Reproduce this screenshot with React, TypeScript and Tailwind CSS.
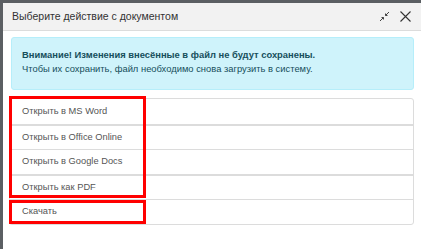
import React from 'react';

const actions = [
  { label: 'Открыть в MS Word', sep: 'border-t-0' },
  { label: 'Открыть в Office Online', sep: 'border-t-2' },
  { label: 'Открыть в Google Docs', sep: 'border-t' },
  { label: 'Открыть как PDF', sep: 'border-t-2' },
  { label: 'Скачать', sep: 'border-t' }
];

export default function App() {
  return (
    <div
      className="relative h-[249px] w-[421px] overflow-hidden bg-[#5b5f63] pl-[3px] pt-[3px]"
      style={{ fontFamily: '"Liberation Sans", Arial, sans-serif' }}
    >
      <div className="h-full w-full rounded-tl-[3px] bg-white">
        <div className="flex h-[28px] items-center justify-between border-b border-[#dcdcdc] bg-[#f2f2f2] pl-[9px] pr-[10px]">
          <span className="text-[10.5px] text-[#333]">Выберите действие с документом</span>
          <div className="flex items-center gap-[10px]">
            <svg width="11" height="11" viewBox="0 0 11 11" fill="none" stroke="#444" strokeWidth="1">
              <path d="M1 10 L4.5 6.5 M10 1 L6.5 4.5" />
              <path d="M2.5 6.5 H4.5 V8.5 M6.5 2.5 V4.5 H8.5" />
            </svg>
            <svg width="11" height="11" viewBox="0 0 11 11" fill="none" stroke="#333" strokeWidth="1.1">
              <path d="M0.5 0.5 L10.5 10.5 M10.5 0.5 L0.5 10.5" />
            </svg>
          </div>
        </div>
        <div className="pl-[6px] pr-[7px] pt-[6px]">
          <div className="ml-[2px] rounded-[3px] border border-[#b6eefa] bg-[#cff3fb] px-[10px] pb-[13px] pt-[10px] text-[9.4px] leading-[14px] text-[#164f5c]">
            <div className="font-bold">Внимание! Изменения внесённые в файл не будут сохранены.</div>
            <div>Чтобы их сохранить, файл необходимо снова загрузить в систему.</div>
          </div>
          <div className="mt-[8px] rounded-[3px] border border-[#dcdcdc]">
            {actions.map((a) => (
              <div
                key={a.label}
                className={`flex h-[25px] items-center border-[#dcdcdc] pl-[12px] text-[9.3px] text-[#555] ${a.sep}`}
              >
                {a.label}
              </div>
            ))}
          </div>
        </div>
      </div>
      <div className="absolute left-[9px] top-[96px] h-[102px] w-[137px] border-[3px] border-[#ff0000]" />
      <div className="absolute left-[9px] top-[200px] h-[24px] w-[137px] border-[3px] border-[#ff0000]" />
    </div>
  );
}
